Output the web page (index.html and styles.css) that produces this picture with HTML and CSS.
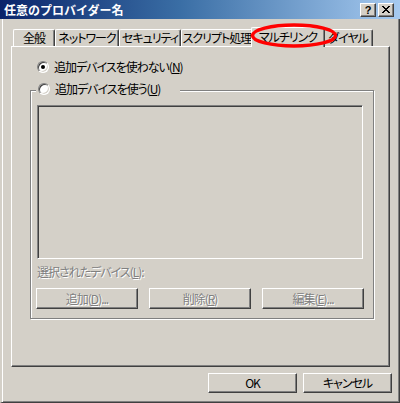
FILE: index.html
```html
<!DOCTYPE html>
<html lang="ja">
<head>
<meta charset="utf-8">
<title>任意のプロバイダー名</title>
<link rel="stylesheet" href="styles.css">
</head>
<body>
<div class="window">
  <div class="titlebar">
    <span class="title">任意のプロバイダー名</span>
    <div class="tbtns">
      <span class="tbtn help">?</span>
      <span class="tbtn close"><svg width="8" height="7" viewBox="0 0 8 7"><path d="M0 0h2v1h-2zM6 0h2v1h-2zM1 1h2v1h-2zM5 1h2v1h-2zM2 2h4v1h-4zM3 3h2v1h-2zM2 4h4v1h-4zM1 5h2v1h-2zM5 5h2v1h-2zM0 6h2v1h-2zM6 6h2v1h-2z" fill="#000"/></svg></span>
    </div>
  </div>
  <div class="body">
    <div class="tabs">
      <div class="tab t1">全般</div>
      <div class="tab t2">ネットワーク</div>
      <div class="tab t3">セキュリティ</div>
      <div class="tab t4">スクリプト処理</div>
      <div class="tab t5 active">マルチリンク</div>
      <div class="tab t6">ダイヤル</div>
    </div>
    <div class="panel">
      <div class="row first">
        <span class="radio checked"></span>
        <span class="lbl">追加デバイスを使わない(<u>N</u>)</span>
      </div>
      <div class="group">
        <div class="legend">
          <span class="radio"></span>
          <span class="lbl">追加デバイスを使う(<u>U</u>)</span>
        </div>
        <div class="listbox"></div>
        <div class="sel-label disabled">選択されたデバイス(<u>L</u>):</div>
        <div class="group-buttons">
          <div class="btn wide disabled">追加(<u>D</u>)...</div>
          <div class="btn wide disabled">削除(<u>R</u>)</div>
          <div class="btn wide disabled">編集(<u>E</u>)...</div>
        </div>
      </div>
    </div>
    <div class="footer">
      <div class="btn dlg">OK</div>
      <div class="btn dlg">キャンセル</div>
    </div>
  </div>
  <svg class="ring" width="92" height="32" viewBox="0 0 92 32"><ellipse cx="44" cy="14.5" rx="41.5" ry="10.5" fill="none" stroke="#ff0000" stroke-width="3.5"/></svg>
</div>
</body>
</html>
```
FILE: styles.css
```css
* { box-sizing: border-box; margin: 0; padding: 0; }
html, body { width: 400px; height: 403px; overflow: hidden; background: #d4d0c8; }
body {
  font-family: "Noto Sans CJK JP", "Noto Sans", sans-serif;
  font-size: 12px;
  line-height: 14px;
  color: #000;
  font-feature-settings: "palt";
  letter-spacing: -1px;
}
u { text-decoration: underline; text-underline-offset: 1px; }

.window {
  position: relative;
  width: 400px;
  height: 403px;
  display: flex;
  flex-direction: column;
  background: #d4d0c8;
}

.titlebar {
  height: 19px;
  flex: none;
  display: flex;
  align-items: center;
  justify-content: space-between;
  padding: 0 6px 0 4px;
  background: linear-gradient(to right, #0a246a 0%, #3a6ea5 45%, #a6caf0 100%);
  color: #fff;
}
.title { font-weight: bold; font-size: 12px; font-feature-settings: normal; letter-spacing: 0; }
.tbtns { display: flex; gap: 2px; }
.tbtn {
  width: 16px;
  height: 14px;
  background: #d4d0c8;
  border: 1px solid;
  border-color: #fff #404040 #404040 #fff;
  box-shadow: inset -1px -1px 0 #808080;
  display: flex;
  align-items: center;
  justify-content: center;
  color: #000;
  font-family: "Liberation Sans", sans-serif;
  font-weight: bold;
  font-size: 11px;
  line-height: 12px;
  letter-spacing: 0;
}

.body {
  flex: 1;
  border-left: 2px solid #d4d0c8;
  border-right: 1px solid #404040;
  border-bottom: 1px solid #404040;
  box-shadow: inset 1px 0 0 #fff, inset -1px -1px 0 #808080;
  padding: 8px 9px 0 9px;
  display: flex;
  flex-direction: column;
}

.tabs {
  height: 19px;
  display: flex;
  align-items: flex-end;
  padding-left: 2px;
}
.tab {
  height: 17px;
  border-top: 1px solid #fff;
  border-left: 1px solid #fff;
  border-right: 1px solid #404040;
  box-shadow: inset -1px 0 0 #808080;
  border-radius: 2px 2px 0 0;
  display: flex;
  align-items: center;
  justify-content: center;
  white-space: nowrap;
  padding-bottom: 1px;
}
.t1 { width: 42px; }
.t2 { width: 64px; }
.t3 { width: 62px; }
.t4 { width: 72px; }
.t5 { width: 70px; }
.t6 { width: 50px; }
.tab.active {
  position: relative;
  z-index: 1;
  height: 20px;
  width: 74px;
  margin: 0 -2px -1px -2px;
  background: #d4d0c8;
  padding-bottom: 2px;
}

.panel {
  width: 379px;
  height: 321px;
  border-top: 1px solid #fff;
  border-left: 1px solid #fff;
  border-right: 1px solid #404040;
  border-bottom: 1px solid #404040;
  box-shadow: inset -1px -1px 0 #808080;
  padding-top: 13px;
}

.row, .legend {
  display: flex;
  align-items: center;
  height: 14px;
  gap: 5px;
  white-space: nowrap;
}
.row.first { margin-left: 25px; }

.radio {
  position: relative;
  width: 12px;
  height: 12px;
  flex: none;
  border-radius: 50%;
  border: 1px solid;
  border-color: #808080 #fff #fff #808080;
  background: #fff;
  box-shadow: inset 1px 1px 0 #404040, inset -1px -1px 0 #d4d0c8;
}
.radio.checked::after {
  content: "";
  position: absolute;
  left: 3px;
  top: 3px;
  width: 4px;
  height: 4px;
  border-radius: 50%;
  background: #000;
}

.group {
  margin: 16px 0 0 18px;
  width: 344px;
  border: 1px solid #808080;
  box-shadow: 1px 1px 0 #fff, inset 1px 1px 0 #fff;
  padding-bottom: 9px;
}
.legend {
  position: relative;
  margin: -9px 0 0 5px;
  padding: 0 0 0 2px;
  width: 144px;
  background: #d4d0c8;
}

.listbox {
  margin: 9px 0 0 6px;
  width: 326px;
  height: 154px;
  border: 1px solid;
  border-color: #808080 #fff #fff #808080;
  box-shadow: inset 1px 1px 0 #404040, inset -1px -1px 0 #d4d0c8;
  background: #d4d0c8;
}

.disabled { color: #808080; text-shadow: 1px 1px 0 #fff; }

.sel-label { margin: 6px 0 0 6px; height: 14px; }

.group-buttons {
  display: flex;
  gap: 11px;
  margin: 9px 0 0 5px;
}

.btn {
  height: 21px;
  background: #d4d0c8;
  border: 1px solid;
  border-color: #fff #404040 #404040 #fff;
  box-shadow: inset -1px -1px 0 #808080;
  display: flex;
  align-items: center;
  justify-content: center;
  white-space: nowrap;
}
.btn.wide { width: 102px; }

.footer {
  display: flex;
  justify-content: flex-end;
  gap: 6px;
  margin: 6px -2px 0 0;
}
.btn.dlg { width: 89px; height: 20px; }

.ring {
  position: absolute;
  z-index: 5;
  left: 250px;
  top: 21px;
}
```
